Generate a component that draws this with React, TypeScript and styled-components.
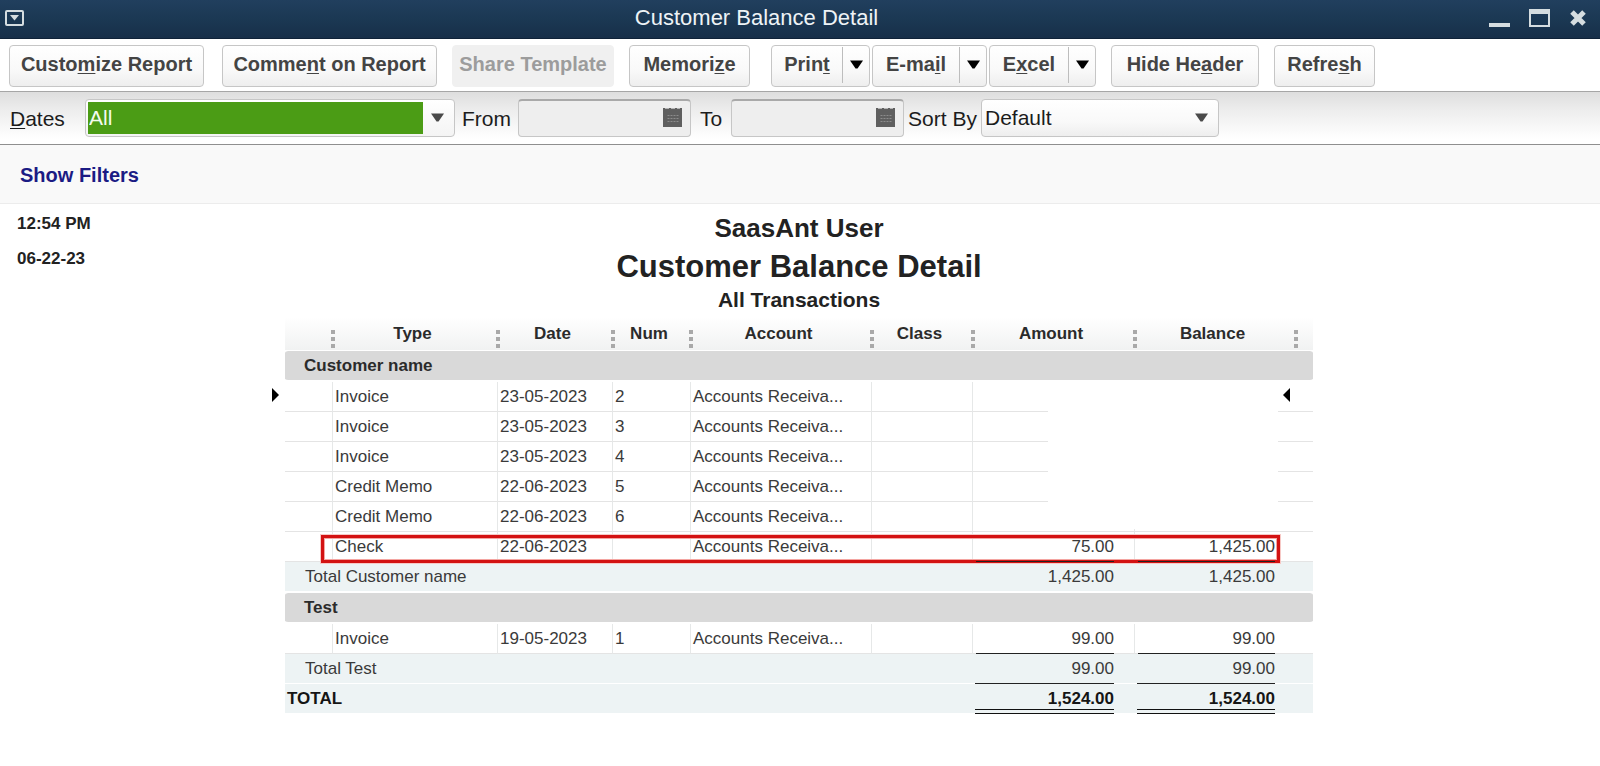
import React from "react";
import styled, { createGlobalStyle, css } from "styled-components";

const GlobalStyle = createGlobalStyle`
  * { box-sizing: border-box; }
  body {
    margin: 0;
    background: #fff;
    color: #222;
    font-family: "Liberation Sans", Arial, sans-serif;
    font-size: 17px;
  }
  button, input, select { font-family: inherit; }
  u { text-underline-offset: 2px; text-decoration-thickness: 1px; text-decoration-skip-ink: none; }
`;

const Window = styled.div`
  display: flex;
  flex-direction: column;
  min-height: 100vh;
`;

const TitleBar = styled.header`
  display: flex;
  align-items: center;
  height: 39px;
  padding: 0 13px 2px 5px;
  background: linear-gradient(#213f5e, #1b3853 50%, #172f49);
  border-bottom: 1px solid #0f2238;
`;

const WindowTitle = styled.div`
  flex: 1;
  text-align: center;
  font-size: 22px;
  line-height: 34px;
  color: #eef3f6;
`;

const WindowControls = styled.div`
  display: flex;
  gap: 19px;
`;

const IconButton = styled.button`
  display: flex;
  padding: 0;
  border: 0;
  background: none;
  color: #d5dde0;
`;

const Toolbar = styled.div`
  display: flex;
  align-items: center;
  gap: 15px;
  height: 53px;
  padding: 1px 9px 0;
  border-bottom: 1px solid #a6a6a6;
`;

const buttonFace = css`
  border: 1px solid #c6c6c6;
  border-radius: 4px;
  background: linear-gradient(#fff, #f9f9f9 60%, #eee);
`;

const ToolButton = styled.button<{ $width: number }>`
  ${buttonFace}
  min-width: ${(p) => p.$width}px;
  height: 42px;
  padding: 0 0 2px;
  font-size: 20px;
  font-weight: bold;
  white-space: nowrap;
  color: #444;

  &:disabled {
    border-color: #f0f0f0;
    background: #f0f0f0;
    color: #9c9c9c;
  }
`;

const LeadButton = styled(ToolButton)`
  margin-right: 3px;
`;

const SplitGroup = styled.div`
  display: flex;
  gap: 2px;
  margin-left: 6px;
`;

const SplitButton = styled.div<{ $width: number }>`
  ${buttonFace}
  display: flex;
  width: ${(p) => p.$width}px;
  height: 42px;
`;

const SplitMain = styled.button`
  flex: 1;
  padding: 0 0 2px;
  border: 0;
  background: none;
  font-size: 20px;
  font-weight: bold;
  color: #444;
`;

const SplitCaret = styled.button`
  display: flex;
  align-items: center;
  justify-content: center;
  width: 27px;
  margin: 1px 0 3px;
  padding: 0 0 1px;
  border: 0;
  border-left: 1px solid #bdbdbd;
  background: none;
`;

const FilterBar = styled.div`
  display: flex;
  align-items: center;
  height: 53px;
  padding: 0 10px 1px;
  background: linear-gradient(#dedede, #ededed 35%, #fff 90%);
  border-bottom: 1px solid #8f8f8f;
`;

const FieldLabel = styled.label<{ $width: number; $align?: string }>`
  width: ${(p) => p.$width}px;
  padding-top: 2px;
  text-align: ${(p) => p.$align ?? "center"};
  font-size: 21px;
  white-space: nowrap;
  color: #1c1c1c;
`;

const SelectBox = styled.div<{ $width: number }>`
  position: relative;
  width: ${(p) => p.$width}px;

  svg {
    position: absolute;
    top: 14px;
    right: 11px;
    pointer-events: none;
  }
`;

const Select = styled.select<{ $active?: boolean }>`
  ${buttonFace}
  appearance: none;
  display: block;
  width: 100%;
  height: 38px;
  padding: 0 32px 0 3px;
  font-size: 21px;
  color: #1c1c1c;
  ${(p) =>
    p.$active &&
    css`
      color: #f4fbef;
      background:
        linear-gradient(#4b9c15, #4b9c15) 2px 2px / calc(100% - 33px) 32px no-repeat,
        linear-gradient(#fff, #f4f4f4);
    `}

  option { color: #1c1c1c; }
`;

const DateBox = styled.div`
  position: relative;
  width: 173px;
`;

const DateInput = styled.input`
  display: block;
  width: 100%;
  height: 38px;
  padding: 0 30px 0 4px;
  border: 1px solid #c6c6c6;
  border-top: 2px solid #a9a9a9;
  border-radius: 4px;
  background: #eee;
  font-size: 21px;
`;

const CalendarButton = styled(IconButton)`
  position: absolute;
  top: 9px;
  right: 9px;
`;

const FilterPanel = styled.div`
  display: flex;
  align-items: center;
  height: 59px;
  padding: 2px 20px 0;
  background: #f9f9f9;
  border-bottom: 1px solid #ececec;
`;

const FilterLink = styled.a`
  font-size: 20px;
  font-weight: bold;
  text-decoration: none;
  color: #1b1b84;
`;

const Report = styled.main`
  flex: 1;
  padding: 0 2px 24px 0;
`;

const ReportHead = styled.div`
  display: grid;
  grid-template-columns: 1fr auto 1fr;
  height: 113px;
`;

const Stamp = styled.div`
  padding: 2px 0 0 17px;
  font-weight: bold;
  line-height: 35px;
`;

const Headings = styled.div`
  padding-top: 5px;
  text-align: center;
  color: #222;
`;

const Company = styled.h2`
  margin: 0;
  font-size: 26px;
  line-height: 38px;
`;

const ReportTitle = styled.h1`
  margin: 0;
  font-size: 31px;
  line-height: 40px;
`;

const Scope = styled.h3`
  margin: 0;
  font-size: 21px;
  line-height: 26px;
`;

const Table = styled.table`
  width: 100%;
  max-width: 1028px;
  margin: 0 auto;
  table-layout: fixed;
  border-collapse: separate;
  border-spacing: 0;
  line-height: 20px;
  color: #3a3a3a;
`;

const Col = styled.col<{ $width: number }>`
  width: ${(p) => p.$width}px;
`;

const HeadCell = styled.th`
  position: relative;
  height: 33px;
  padding: 0 4px 0 0;
  background: linear-gradient(#fff, #f1f2f2);
  color: #2b2b2b;

  &:not(:first-child)::before {
    content: "";
    position: absolute;
    left: -1px;
    bottom: 2px;
    width: 4px;
    height: 18px;
    background: repeating-linear-gradient(#a9a9a9 0 4px, transparent 4px 7px);
  }
`;

const GroupCell = styled.th`
  height: 32px;
  padding: 0 19px;
  border-top: 1px solid #fff;
  border-bottom: 2px solid #fff;
  border-radius: 3px;
  background: #d9d9d9;
  background-clip: padding-box;
  text-align: left;
  color: #2b2b2b;
`;

const Row = styled.tr`
  position: relative;
`;

const Cell = styled.td<{ $ruled?: boolean }>`
  height: 30px;
  padding: 0 2px;
  border-bottom: 1px solid #e4e4e4;
  white-space: nowrap;
  overflow: hidden;
  border-left: 1px solid ${(p) => (p.$ruled ? "#e6e8e8" : "transparent")};
`;

const EdgeCell = styled(Cell)`
  border-left: 0;
  overflow: visible;
`;

const rule = {
  single: css`
    height: 1px;
    background: #222;
  `,
  double: css`
    height: 3px;
    border-top: 1px solid #111;
    border-bottom: 1px solid #111;
  `,
};

const MoneyCell = styled(Cell)<{ $rule?: "single" | "double" }>`
  position: relative;
  overflow: visible;
  padding-right: 20px;
  text-align: right;

  ${(p) =>
    p.$rule &&
    css`
      &::after {
        content: "";
        position: absolute;
        left: 3px;
        right: 20px;
        bottom: -1px;
        z-index: 3;
        ${rule[p.$rule]}
      }
    `}
`;

const TotalRow = styled.tr<{ $grand?: boolean }>`
  font-weight: ${(p) => (p.$grand ? "bold" : "normal")};
  color: ${(p) => (p.$grand ? "#151515" : "#3a3a3a")};

  td, th {
    height: 30px;
    border-bottom: 1px solid #fff;
    background: #edf3f4;
    background-clip: padding-box;
  }
  td { border-left: 0; }
  th {
    padding: 0 0 0 ${(p) => (p.$grand ? 2 : 20)}px;
    font-weight: inherit;
    text-align: left;
  }
`;

const Marker = styled.svg<{ $side: "left" | "right" }>`
  position: absolute;
  top: 6px;
  ${(p) => (p.$side === "left" ? "left: -13px;" : "right: 23px;")}
`;

const HiddenAmounts = styled.div`
  position: absolute;
  top: 0;
  left: 763px;
  right: 35px;
  z-index: 1;
  height: 147px;
  background: #fff;
`;

const Highlight = styled.div`
  position: absolute;
  top: 3px;
  right: 33px;
  bottom: -1px;
  left: 36px;
  z-index: 2;
  border: 3px solid #d31212;
  box-shadow: 0 0 0 1px #f7c9c6, inset 0 0 0 1px #f4a5a1;
`;

const Caret = ({ color = "#000" }: { color?: string }) => (
  <svg width="13" height="9" viewBox="0 0 13 9" aria-hidden="true">
    <path d="M0 0.5h13L7.5 8.5h-2z" fill={color} />
  </svg>
);

const Calendar = () => (
  <svg width="19" height="19" viewBox="0 0 19 19" aria-hidden="true">
    <rect width="19" height="19" fill="#5f5f5f" />
    <path d="M2 0.5h4M8 0.5h4M14 0.5h3" stroke="#b5b5b5" />
    <path d="M4.5 7.5h11M4.5 10.5h11M4.5 13.5h11" stroke="#8c8c8c" strokeDasharray="2 1" />
  </svg>
);

type Entry = {
  type: string;
  date: string;
  num: string;
  amount?: string;
  balance?: string;
  current?: boolean;
  marked?: boolean;
};

type Group = { name: string; entries: Entry[]; amount: string; balance: string; closed?: boolean };

const columns = ["", "Type", "Date", "Num", "Account", "Class", "Amount", "Balance", ""];
const widths = [47, 165, 115, 78, 181, 101, 162, 161, 18];

const groups: Group[] = [
  {
    name: "Customer name",
    amount: "1,425.00",
    balance: "1,425.00",
    entries: [
      { type: "Invoice", date: "23-05-2023", num: "2", current: true },
      { type: "Invoice", date: "23-05-2023", num: "3" },
      { type: "Invoice", date: "23-05-2023", num: "4" },
      { type: "Credit Memo", date: "22-06-2023", num: "5" },
      { type: "Credit Memo", date: "22-06-2023", num: "6" },
      { type: "Check", date: "22-06-2023", num: "", amount: "75.00", balance: "1,425.00", marked: true },
    ],
  },
  {
    name: "Test",
    amount: "99.00",
    balance: "99.00",
    closed: true,
    entries: [{ type: "Invoice", date: "19-05-2023", num: "1", amount: "99.00", balance: "99.00" }],
  },
];

const EntryRow = ({ entry }: { entry: Entry }) => {
  const underline = entry.amount ? "single" : undefined;
  return (
    <Row>
      <EdgeCell>
        {entry.current && (
          <>
            <Marker $side="left" width="7" height="14" viewBox="0 0 7 14"><path d="M0 0l7 7-7 7z" /></Marker>
            <Marker $side="right" width="7" height="14" viewBox="0 0 7 14"><path d="M7 0L0 7l7 7z" /></Marker>
            <HiddenAmounts />
          </>
        )}
        {entry.marked && <Highlight />}
      </EdgeCell>
      <Cell $ruled>{entry.type}</Cell>
      <Cell $ruled>{entry.date}</Cell>
      <Cell $ruled>{entry.num}</Cell>
      <Cell $ruled>Accounts Receiva...</Cell>
      <Cell $ruled />
      <MoneyCell $ruled $rule={underline}>{entry.amount}</MoneyCell>
      <MoneyCell $ruled $rule={underline}>{entry.balance}</MoneyCell>
      <EdgeCell />
    </Row>
  );
};

export default function App() {
  return (
    <Window>
      <GlobalStyle />
      <TitleBar>
        <IconButton aria-label="Window menu">
          <svg width="19" height="16" viewBox="0 0 19 16">
            <rect x="1" y="1" width="17" height="14" rx="1" fill="none" stroke="currentColor" strokeWidth="2" />
            <path d="M5 5h9l-4.5 5.5z" fill="currentColor" />
          </svg>
        </IconButton>
        <WindowTitle>Customer Balance Detail</WindowTitle>
        <WindowControls>
          <IconButton aria-label="Minimize">
            <svg width="21" height="18" viewBox="0 0 21 18"><path d="M0 14h21v4H0z" fill="currentColor" /></svg>
          </IconButton>
          <IconButton aria-label="Maximize">
            <svg width="21" height="18" viewBox="0 0 21 18">
              <path d="M0 0h21v18H0zM2 5v11h17V5z" fill="currentColor" fillRule="evenodd" />
            </svg>
          </IconButton>
          <IconButton aria-label="Close">
            <svg width="18" height="18" viewBox="0 0 18 18">
              <path d="M3 3l12 12M15 3L3 15" stroke="currentColor" strokeWidth="5" />
            </svg>
          </IconButton>
        </WindowControls>
      </TitleBar>

      <Toolbar>
        <LeadButton $width={195}>Custo<u>m</u>ize Report</LeadButton>
        <ToolButton $width={215}>Comme<u>n</u>t on Report</ToolButton>
        <ToolButton $width={162} disabled>Share Template</ToolButton>
        <ToolButton $width={121}>Memori<u>z</u>e</ToolButton>
        <SplitGroup>
          <SplitButton $width={99}>
            <SplitMain>Prin<u>t</u></SplitMain>
            <SplitCaret aria-label="Print options"><Caret /></SplitCaret>
          </SplitButton>
          <SplitButton $width={115}>
            <SplitMain>E-ma<u>i</u>l</SplitMain>
            <SplitCaret aria-label="E-mail options"><Caret /></SplitCaret>
          </SplitButton>
          <SplitButton $width={107}>
            <SplitMain>E<u>x</u>cel</SplitMain>
            <SplitCaret aria-label="Excel options"><Caret /></SplitCaret>
          </SplitButton>
        </SplitGroup>
        <ToolButton $width={148}>Hide He<u>a</u>der</ToolButton>
        <ToolButton $width={101}>Refre<u>s</u>h</ToolButton>
      </Toolbar>

      <FilterBar>
        <FieldLabel htmlFor="dates" $width={75} $align="left"><u>D</u>ates</FieldLabel>
        <SelectBox $width={370}>
          <Select id="dates" $active defaultValue="All"><option>All</option></Select>
          <Caret color="#4a4a4a" />
        </SelectBox>
        <FieldLabel htmlFor="from" $width={63}>From</FieldLabel>
        <DateBox>
          <DateInput id="from" type="text" />
          <CalendarButton aria-label="Pick start date"><Calendar /></CalendarButton>
        </DateBox>
        <FieldLabel htmlFor="to" $width={40}>To</FieldLabel>
        <DateBox>
          <DateInput id="to" type="text" />
          <CalendarButton aria-label="Pick end date"><Calendar /></CalendarButton>
        </DateBox>
        <FieldLabel htmlFor="sort" $width={77}>Sort By</FieldLabel>
        <SelectBox $width={238}>
          <Select id="sort" defaultValue="Default"><option>Default</option></Select>
          <Caret color="#4a4a4a" />
        </SelectBox>
      </FilterBar>

      <FilterPanel>
        <FilterLink href="#filters">Show Filters</FilterLink>
      </FilterPanel>

      <Report>
        <ReportHead>
          <Stamp>
            <div>12:54 PM</div>
            <div>06-22-23</div>
          </Stamp>
          <Headings>
            <Company>SaasAnt User</Company>
            <ReportTitle>Customer Balance Detail</ReportTitle>
            <Scope>All Transactions</Scope>
          </Headings>
        </ReportHead>

        <Table>
          <colgroup>
            {widths.map((w, i) => <Col key={i} $width={w} />)}
          </colgroup>
          <thead>
            <tr>
              {columns.map((c, i) => <HeadCell key={i} scope="col">{c}</HeadCell>)}
            </tr>
          </thead>
          {groups.map((g) => (
            <tbody key={g.name}>
              <tr><GroupCell colSpan={9} scope="rowgroup">{g.name}</GroupCell></tr>
              {g.entries.map((e, i) => <EntryRow key={i} entry={e} />)}
              <TotalRow>
                <th colSpan={6} scope="row">Total {g.name}</th>
                <MoneyCell $rule={g.closed ? "single" : undefined}>{g.amount}</MoneyCell>
                <MoneyCell $rule={g.closed ? "single" : undefined}>{g.balance}</MoneyCell>
                <td />
              </TotalRow>
            </tbody>
          ))}
          <tfoot>
            <TotalRow $grand>
              <th colSpan={6} scope="row">TOTAL</th>
              <MoneyCell $rule="double">1,524.00</MoneyCell>
              <MoneyCell $rule="double">1,524.00</MoneyCell>
              <td />
            </TotalRow>
          </tfoot>
        </Table>
      </Report>
    </Window>
  );
}
